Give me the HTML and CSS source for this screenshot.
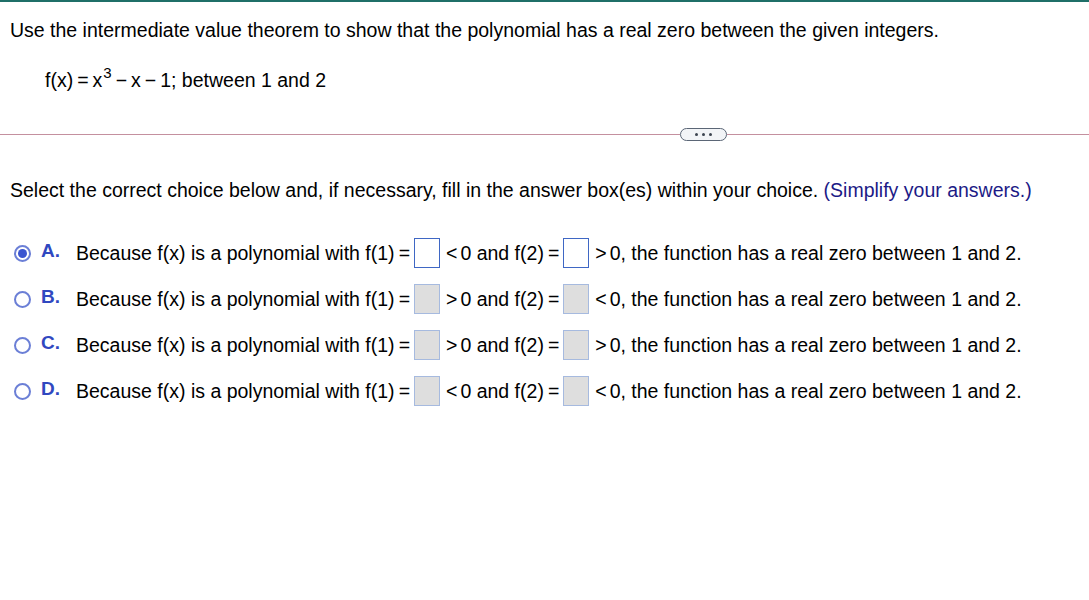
FILE: index.html
```html
<!DOCTYPE html>
<html>
<head>
<meta charset="utf-8">
<link rel="stylesheet" href="styles.css">
</head>
<body>
<div class="page">
  <div class="question">
    <p class="prompt">Use the intermediate value theorem to show that the polynomial has a real zero between the given integers.</p>
    <p class="formula">f(x)<span class="op">=</span>x<sup>3</sup><span class="op">−</span>x<span class="op">−</span>1; between 1 and 2</p>
  </div>
  <div class="divider">
    <span class="line left"></span>
    <span class="pill"><i></i><i></i><i></i></span>
    <span class="line"></span>
  </div>
  <p class="instr">Select the correct choice below and, if necessary, fill in the answer box(es) within your choice. <span class="hint">(Simplify your answers.)</span></p>
  <ul class="choices">
    <li class="choice">
      <span class="radio checked"></span><span class="letter">A.</span>
      <span class="txt">Because f(x) is a polynomial with f(1)<span class="eq">=</span></span><span class="box active"></span><span class="txt"><span class="rel">&lt;</span>0 and f(2)<span class="eq">=</span></span><span class="box active"></span><span class="txt"><span class="rel">&gt;</span>0, the function has a real zero between 1 and 2.</span>
    </li>
    <li class="choice">
      <span class="radio"></span><span class="letter">B.</span>
      <span class="txt">Because f(x) is a polynomial with f(1)<span class="eq">=</span></span><span class="box"></span><span class="txt"><span class="rel">&gt;</span>0 and f(2)<span class="eq">=</span></span><span class="box"></span><span class="txt"><span class="rel">&lt;</span>0, the function has a real zero between 1 and 2.</span>
    </li>
    <li class="choice">
      <span class="radio"></span><span class="letter">C.</span>
      <span class="txt">Because f(x) is a polynomial with f(1)<span class="eq">=</span></span><span class="box"></span><span class="txt"><span class="rel">&gt;</span>0 and f(2)<span class="eq">=</span></span><span class="box"></span><span class="txt"><span class="rel">&gt;</span>0, the function has a real zero between 1 and 2.</span>
    </li>
    <li class="choice">
      <span class="radio"></span><span class="letter">D.</span>
      <span class="txt">Because f(x) is a polynomial with f(1)<span class="eq">=</span></span><span class="box"></span><span class="txt"><span class="rel">&lt;</span>0 and f(2)<span class="eq">=</span></span><span class="box"></span><span class="txt"><span class="rel">&lt;</span>0, the function has a real zero between 1 and 2.</span>
    </li>
  </ul>
</div>
</body>
</html>
```
FILE: styles.css
```css
html, body {
  margin: 0;
  padding: 0;
  background: #fff;
}
body {
  font-family: "Liberation Sans", Arial, sans-serif;
  font-size: 19.5px;
  color: #000;
}
.page {
  border-top: 2px solid #1f6f68;
  min-height: 598px;
}
.question {
  padding: 14px 10px 0 10px;
}
.prompt {
  margin: 0;
  line-height: 28px;
}
.formula {
  margin: 22px 0 0 35px;
  line-height: 28px;
}
.formula sup {
  font-size: 15px;
  vertical-align: 9px;
  line-height: 0;
  margin-left: 1px;
}
.op {
  margin: 0 4px;
}
.divider {
  display: flex;
  align-items: center;
  margin-top: 33px;
  height: 14px;
}
.line {
  flex: 1;
  height: 1px;
  background: #c4909f;
}
.line.left {
  flex: none;
  width: 680px;
}
.pill {
  width: 45px;
  height: 11px;
  border: 1px solid #5b6676;
  border-radius: 7px;
  background: #f2f4f7;
  display: flex;
  align-items: center;
  justify-content: center;
  gap: 4px;
}
.pill i {
  width: 3px;
  height: 3px;
  border-radius: 50%;
  background: #3c4450;
}
.instr {
  margin: 35px 0 0 10px;
  line-height: 28px;
}
.hint {
  color: #1c1a86;
}
.choices {
  list-style: none;
  margin: 26px 0 0 0;
  padding: 0;
}
.choice {
  display: flex;
  align-items: center;
  height: 46px;
  padding-left: 14px;
}
.radio {
  width: 17px;
  height: 17px;
  border: 2px solid #6b7fd6;
  border-radius: 50%;
  box-sizing: border-box;
  position: relative;
  flex: none;
}
.radio.checked::after {
  content: "";
  position: absolute;
  left: 2px;
  top: 2px;
  width: 9px;
  height: 9px;
  border-radius: 50%;
  background: #3b55d0;
}
.letter {
  font-weight: bold;
  font-size: 19px;
  color: #3048c0;
  margin-left: 10px;
  width: 35px;
  position: relative;
  top: -2px;
}
.txt {
  white-space: pre;
}
.eq {
  margin-left: 4px;
}
.rel {
  margin-right: 3px;
}
.box {
  width: 24px;
  height: 28px;
  border: 1px solid #a6badf;
  background: #dedede;
  margin: 0 6px 0 4px;
  flex: none;
}
.box.active {
  background: #fff;
  border-color: #3f67c4;
}
```
